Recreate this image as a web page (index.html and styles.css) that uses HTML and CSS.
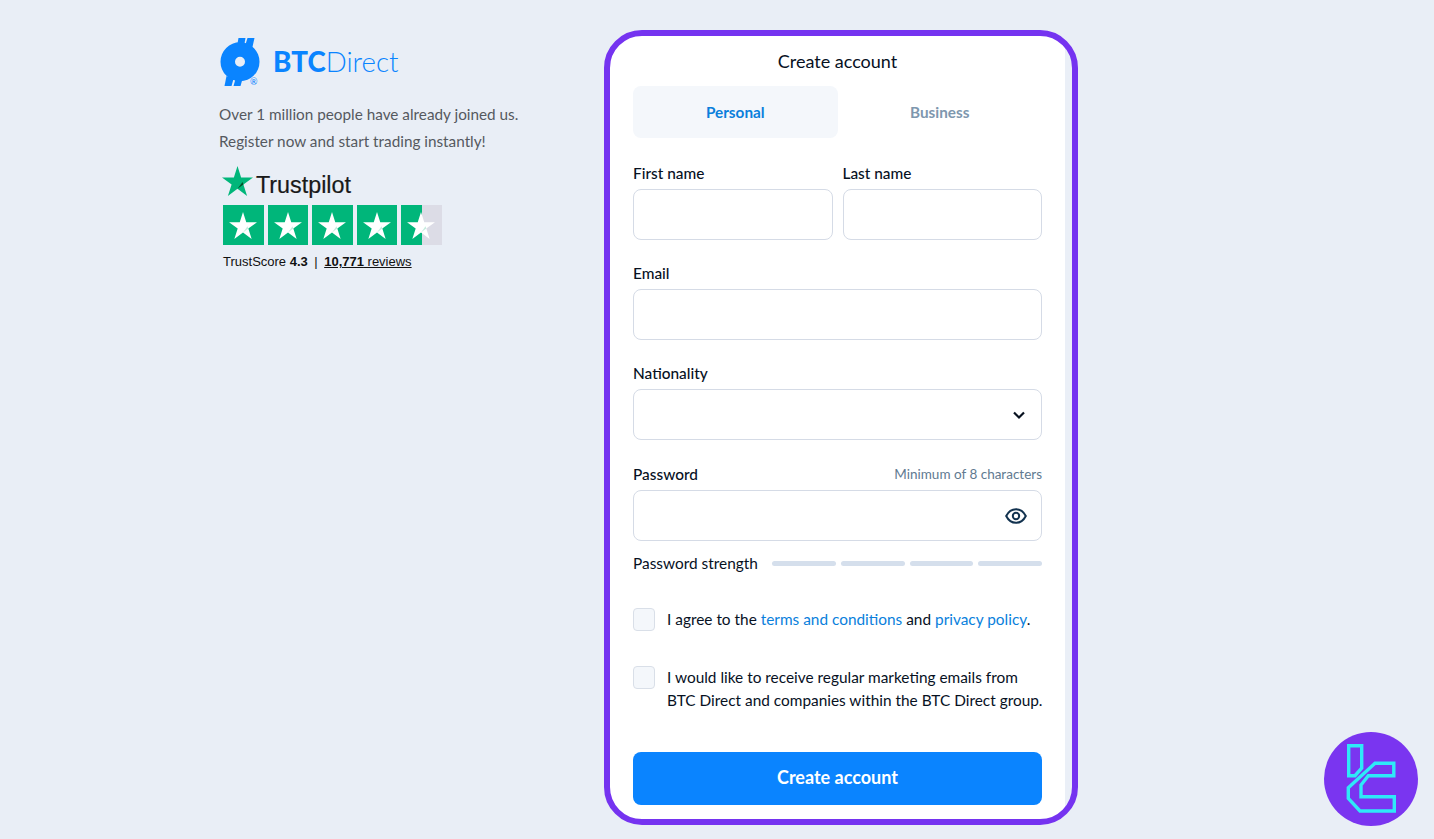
FILE: index.html
```html
<!DOCTYPE html>
<html lang="en">
<head>
    <meta charset="UTF-8">
    <meta name="viewport" content="width=device-width, initial-scale=1.0">
    <title>Create account - BTC Direct</title>
    <link rel="stylesheet" href="styles.css">
</head>
<body>
    <svg class="defs" width="0" height="0">
        <symbol id="tpStar" viewBox="0 0 30 29">
            <polygon points="15,0 18.5,11 30,11 20.7,17.8 24.3,29 15,22.1 5.7,29 9.3,17.8 0,11 11.5,11"/>
            <polygon points="15,22.1 20.7,17.8 19.9,15.4" fill="currentColor"/>
        </symbol>
    </svg>

    <div class="page">
        <aside class="intro">
            <div class="logo">
                <svg class="logo-coin" viewBox="0 0 42 50" width="42" height="50">
                    <g fill="#0a84ff">
                        <path fill-rule="evenodd" d="M21 5.200a19.500 19.500 0 1 0 0 39 19.500 19.500 0 0 0 0-39zM21 19.700a5 5 0 1 1 0 10 5 5 0 0 1 0-10z"/>
                        <polygon points="19.500,1 26.500,1 25,9 18,9"/>
                        <polygon points="28.500,1 35.500,1 33,12 26,9"/>
                        <polygon points="7.500,39 14.500,42 12.500,49 5.500,49"/>
                        <polygon points="16.500,42 23.500,42 21.500,49 14.500,49"/>
                    </g>
                </svg>
                <span class="logo-reg">®</span>
                <span class="logo-text"><b>BTC</b>Direct</span>
            </div>
            <p class="intro-text">Over 1 million people have already joined us.</p>
            <p class="intro-text">Register now and start trading instantly!</p>

            <div class="tp">
                <div class="tp-brand">
                    <svg class="tp-logo-star" width="31" height="30"><use href="#tpStar"/></svg>
                    <span>Trustpilot</span>
                </div>
                <div class="tp-stars">
                    <div class="tp-box"><svg width="28" height="27"><use href="#tpStar"/></svg></div>
                    <div class="tp-box"><svg width="28" height="27"><use href="#tpStar"/></svg></div>
                    <div class="tp-box"><svg width="28" height="27"><use href="#tpStar"/></svg></div>
                    <div class="tp-box"><svg width="28" height="27"><use href="#tpStar"/></svg></div>
                    <div class="tp-box half"><svg width="28" height="27"><use href="#tpStar"/></svg></div>
                </div>
                <div class="tp-score">TrustScore <b>4.3</b><span class="sep">|</span><a href="#"><b>10,771</b> reviews</a></div>
            </div>
        </aside>

        <main class="card">
            <h1>Create account</h1>
            <div class="tabs">
                <div class="tab active">Personal</div>
                <div class="tab">Business</div>
            </div>

            <div class="name-row">
                <div class="field">
                    <label>First name</label>
                    <div class="input"></div>
                </div>
                <div class="field">
                    <label>Last name</label>
                    <div class="input"></div>
                </div>
            </div>
            <div class="field">
                <label>Email</label>
                <div class="input"></div>
            </div>
            <div class="field">
                <label>Nationality</label>
                <div class="input with-icon">
                    <svg width="14" height="10" viewBox="0 0 14 10"><path d="M2 2.500l5 5 5-5" fill="none" stroke="#07111f" stroke-width="2.200"/></svg>
                </div>
            </div>
            <div class="field password">
                <div class="label-row">
                    <label>Password</label>
                    <span class="hint">Minimum of 8 characters</span>
                </div>
                <div class="input with-icon eye">
                    <svg width="22" height="16" viewBox="0 0 22 16"><path d="M1.200 8C3.400 3.600 6.900 1.200 11 1.200S18.600 3.600 20.800 8C18.600 12.400 15.100 14.800 11 14.800S3.400 12.400 1.200 8z" fill="none" stroke="#12324f" stroke-width="2"/><circle cx="11" cy="8" r="3.200" fill="none" stroke="#12324f" stroke-width="2"/></svg>
                </div>
            </div>

            <div class="strength">
                <span>Password strength</span>
                <div class="bars"><i></i><i></i><i></i><i></i></div>
            </div>

            <div class="check first">
                <div class="box"></div>
                <p>I agree to the <a href="#">terms and conditions</a> and <a href="#">privacy policy</a>.</p>
            </div>
            <div class="check second">
                <div class="box"></div>
                <p>I would like to receive regular marketing emails from<br>BTC Direct and companies within the BTC Direct group.</p>
            </div>

            <button class="submit">Create account</button>
        </main>
    </div>

    <div class="badge">
        <svg viewBox="0 0 94 94" width="94" height="94">
            <g fill="none" stroke="#2ee9f8" stroke-width="3.400">
                <path d="M24.700 13.700H37.700V36L31 43.700H24.700z"/>
                <path d="M51 31.300H69.800V43.700H44.300L37 53V64.700H70.300V79H36L24.300 66.300V55.700z"/>
            </g>
        </svg>
    </div>
</body>
</html>
```

FILE: styles.css
```css
* {
    box-sizing: border-box;
}
body {
    margin: 0;
    height: 839px;
    overflow: hidden;
    background: #e9eef6;
    font-family: Lato, "Noto Sans", sans-serif;
    color: #07111f;
}
.defs {
    display: block;
    height: 0;
}
.page {
    display: flex;
    padding: 30px 0 0 219px;
}

/* left column */
.intro {
    width: 385px;
}
.logo {
    position: relative;
    display: flex;
    align-items: center;
    gap: 12px;
    height: 50px;
    margin-top: 7px;
}
.logo-coin {
    width: 42px;
    height: 50px;
}
.logo-reg {
    position: absolute;
    left: 31px;
    top: 39px;
    font-size: 9px;
    color: #0a84ff;
}
.logo-text {
    font-size: 27.700px;
    font-weight: 300;
    color: #0a84ff;
    margin-top: -2px;
}
.logo-text b {
    font-weight: 900;
}
.intro-text {
    margin: 0;
    font-size: 15.300px;
    line-height: 27px;
    color: #55595f;
}
.logo + .intro-text {
    margin-top: 14px;
}
.tp {
    margin: 11px 0 0 4px;
}
.tp-brand {
    display: flex;
    align-items: flex-end;
    gap: 3px;
    height: 33px;
    margin-left: -1px;
    font-family: "Liberation Sans", sans-serif;
    font-size: 23.300px;
    color: #191919;
    -webkit-text-stroke: 0.2px #191919;
}
.tp-logo-star {
    fill: #00b67a;
    color: #005128;
    margin-bottom: 3px;
}
.tp-stars {
    display: flex;
    gap: 4px;
    margin-top: 6px;
}
.tp-box {
    display: flex;
    align-items: center;
    justify-content: center;
    width: 40.500px;
    height: 40px;
    background: #00b67a;
    fill: #fff;
    color: #c8ecdf;
}
.tp-box.half {
    background: linear-gradient(90deg, #00b67a 50%, #dcdce6 50%);
}
.tp-score {
    margin-top: 9px;
    font-family: "Liberation Sans", sans-serif;
    font-size: 13px;
    color: #111;
}
.tp-score a {
    color: #111;
}
.sep {
    margin: 0 6.500px;
}

/* form card */
.card {
    width: 474px;
    height: 795px;
    padding: 0 30px 0 23px;
    background: linear-gradient(90deg, #fff calc(100% - 7px), #eaeff7 0);
    border: 6px solid #7533f0;
    border-radius: 38px;
}
h1 {
    margin: 0;
    padding-top: 14px;
    height: 50px;
    font-size: 18px;
    line-height: 22px;
    font-weight: 400;
    text-align: center;
}
.tabs {
    display: flex;
}
.tab {
    flex: 1;
    height: 52px;
    line-height: 52px;
    text-align: center;
    font-size: 15.300px;
    font-weight: 700;
    color: #7e97ae;
    border-radius: 8px;
}
.tab.active {
    background: #f4f7fb;
    color: #0a7fdc;
}
.name-row {
    display: flex;
    gap: 10px;
    margin-top: 25px;
}
.name-row .field {
    flex: 1;
    margin-top: 0;
}
.field {
    margin-top: 23px;
}
.field.password {
    margin-top: 24px;
}
label {
    display: block;
    height: 26px;
    font-size: 15.400px;
    line-height: 20px;
    font-weight: 500;
}
.label-row {
    display: flex;
    justify-content: space-between;
}
.hint {
    font-size: 13.500px;
    line-height: 20px;
    color: #617a91;
}
.input {
    height: 51px;
    background: #fff;
    border: 1px solid #d5dbe6;
    border-radius: 8px;
}
.with-icon {
    display: flex;
    align-items: center;
    justify-content: flex-end;
    padding-right: 15px;
}
.eye {
    padding-right: 14px;
}
.strength {
    display: flex;
    align-items: center;
    justify-content: space-between;
    margin-top: 12px;
    font-size: 15.400px;
    line-height: 20px;
}
.bars {
    display: flex;
    gap: 5px;
    width: 270px;
}
.bars i {
    flex: 1;
    height: 5px;
    border-radius: 3px;
    background: #d5dfec;
}
.check {
    display: flex;
    gap: 12px;
}
.check.first {
    margin-top: 35px;
}
.check.second {
    margin-top: 35px;
}
.box {
    flex: none;
    width: 22px;
    height: 23px;
    background: #f4f7fb;
    border: 1px solid #d9dfe8;
    border-radius: 4px;
}
.check p {
    margin: 0;
    font-size: 15.400px;
    line-height: 23px;
    white-space: nowrap;
}
.check a {
    color: #0a7fdc;
    text-decoration: none;
}
.submit {
    display: block;
    width: 100%;
    height: 53px;
    margin-top: 40px;
    padding: 0 0 4px;
    border: none;
    border-radius: 8px;
    background: #0a84ff;
    color: #fff;
    font-family: inherit;
    font-size: 18px;
    font-weight: 700;
}

/* corner watermark */
.badge {
    position: absolute;
    left: 1324px;
    top: 732px;
    width: 94px;
    height: 94px;
    border-radius: 50%;
    background: #7a35f0;
}
.badge svg {
    display: block;
}
```
